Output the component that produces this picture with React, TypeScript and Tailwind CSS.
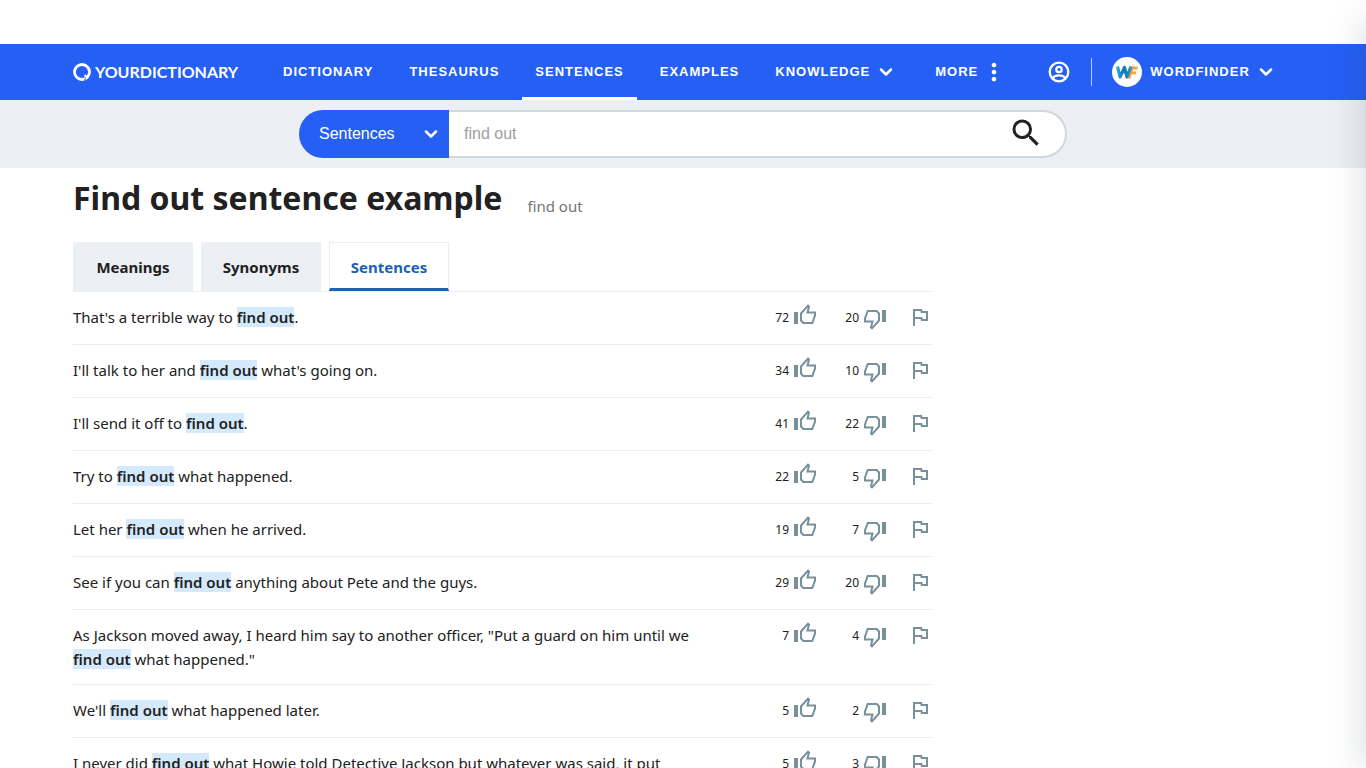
import { FiChevronDown } from "react-icons/fi";
import { MdMoreVert, MdOutlineFlag, MdSearch } from "react-icons/md";

type Sentence = {
    before: string;
    after: string;
    up: number;
    down: number;
};

const sentences: Sentence[] = [
    { before: "That's a terrible way to ", after: ".", up: 72, down: 20 },
    { before: "I'll talk to her and ", after: " what's going on.", up: 34, down: 10 },
    { before: "I'll send it off to ", after: ".", up: 41, down: 22 },
    { before: "Try to ", after: " what happened.", up: 22, down: 5 },
    { before: "Let her ", after: " when he arrived.", up: 19, down: 7 },
    { before: "See if you can ", after: " anything about Pete and the guys.", up: 29, down: 20 },
    {
        before: "As Jackson moved away, I heard him say to another officer, \"Put a guard on him until we ",
        after: " what happened.\"",
        up: 7,
        down: 4,
    },
    { before: "We'll ", after: " what happened later.", up: 5, down: 2 },
    {
        before: "I never did ",
        after: " what Howie told Detective Jackson but whatever was said, it put",
        up: 5,
        down: 3,
    },
];

const navLinks = ["Dictionary", "Thesaurus", "Sentences", "Examples"];
const tabs = ["Meanings", "Synonyms", "Sentences"];

function ThumbIcon({ className = "" }: { className?: string }) {
    return (
        <svg viewBox="0 0 24 24" className={`size-6 ${className}`} fill="none">
            <path d="M1 10h4v12H1z" fill="currentColor" />
            <path
                d="M8 18.500V11.500L15 3.600l1 1-1.500 5.900H22v3L19.300 21h-9z"
                stroke="currentColor"
                strokeWidth="2"
            />
        </svg>
    );
}

function AccountIcon() {
    return (
        <svg viewBox="0 0 24 24" className="size-6" fill="none" stroke="currentColor" strokeWidth="2.300">
            <circle cx="12" cy="12" r="9.300" />
            <circle cx="12" cy="9.500" r="2.700" />
            <path d="M5.500 18c1.800-2 4-2.600 6.500-2.600s4.700.6 6.500 2.600" />
        </svg>
    );
}

function Logo() {
    return (
        <a href="#" className="flex w-[210px] shrink-0 items-center gap-1 tracking-normal text-white">
            <svg viewBox="0 0 18 18" className="size-[18px]" fill="none">
                <circle cx="9" cy="9" r="7.5" stroke="currentColor" strokeWidth="2.800" />
                <path d="M11.500 17.500l1.500-3.500" stroke="#255ff4" strokeWidth="1" />
                <path d="M11.500 12l3 3" stroke="currentColor" strokeWidth="2" />
            </svg>
            <span className="font-['Lato',sans-serif] text-base font-bold">YOURDICTIONARY</span>
        </a>
    );
}

function WordFinderLogo() {
    return (
        <svg viewBox="0 0 30 30" className="size-[30px]" fill="none">
            <defs>
                <linearGradient id="wf-w" x1="4" y1="0" x2="19" y2="0" gradientUnits="userSpaceOnUse">
                    <stop stopColor="#27b5d8" />
                    <stop offset="0.5" stopColor="#1273b8" />
                    <stop offset="1" stopColor="#1f9bb5" />
                </linearGradient>
            </defs>
            <circle cx="15" cy="15" r="15" fill="#fff" />
            <path d="M17 21.500L20 11H25.500M19 15.800h5" stroke="#f9a13a" strokeWidth="2.800" />
            <path
                d="M5.500 9.500l2.500 10.500 4.500-9.500 2.500 9.500 4-10.500"
                stroke="url(#wf-w)"
                strokeWidth="3.200"
                strokeLinejoin="round"
            />
        </svg>
    );
}

function Header() {
    return (
        <header className="h-14 bg-[#255ff4] px-[73px] font-['Liberation_Sans',sans-serif] text-[13px] font-bold tracking-[1px] text-white">
            <nav className="flex h-full items-center">
                <Logo />
                <div className="-ml-[13px] flex h-full gap-[10px]">
                    {navLinks.map((label) => (
                        <a
                            key={label}
                            href="#"
                            className={`flex h-full items-center border-b-3 px-[13px] pt-[2px] uppercase ${
                                label === "Sentences" ? "border-white" : "border-transparent"
                            }`}
                        >
                            {label}
                        </a>
                    ))}
                </div>
                <button className="ml-[23px] flex items-center gap-[6px]">
                    KNOWLEDGE
                    <FiChevronDown className="size-5" strokeWidth={3} />
                </button>
                <button className="ml-[39px] flex items-center gap-[2px]">
                    MORE
                    <MdMoreVert className="size-7" />
                </button>
                <button aria-label="Account" className="ml-[39px]">
                    <AccountIcon />
                </button>
                <div className="ml-5 h-7 w-px bg-white/70" />
                <button className="ml-5 flex items-center gap-2">
                    <WordFinderLogo />
                    <span className="flex items-center gap-[6px]">
                        WORDFINDER
                        <FiChevronDown className="size-5" strokeWidth={3} />
                    </span>
                </button>
            </nav>
        </header>
    );
}

function SearchBar() {
    return (
        <div className="bg-[#eceff4] py-[10px] font-['Liberation_Sans',sans-serif]">
            <form className="mx-auto flex h-12 w-full max-w-3xl">
                <div className="relative">
                    <select
                        aria-label="Search in"
                        className="h-full w-[150px] appearance-none rounded-l-full bg-[#255ff4] pl-5 text-base text-white"
                    >
                        <option>Sentences</option>
                    </select>
                    <FiChevronDown
                        className="pointer-events-none absolute top-[14px] right-2 size-5 text-white"
                        strokeWidth={3}
                    />
                </div>
                <div className="flex flex-1 items-center rounded-r-full border-2 border-l-0 border-[#cfd8dc] bg-white pr-[21px]">
                    <input
                        aria-label="Search"
                        placeholder="find out"
                        className="h-full min-w-0 flex-1 px-[15px] text-base outline-none placeholder:text-[#9e9e9e]"
                    />
                    <button type="button" aria-label="Submit search" className="pb-[2px]">
                        <MdSearch className="size-9 text-[#212121]" />
                    </button>
                </div>
            </form>
        </div>
    );
}

function SentenceRow({ sentence }: { sentence: Sentence }) {
    return (
        <li className="flex justify-between border-b border-[#eceff1] py-[13px]">
            <p className="w-[640px] leading-6">
                {sentence.before}
                <strong className="bg-[#d4eafc] font-semibold">find out</strong>
                {sentence.after}
            </p>
            <div className="flex h-[26px] items-center pr-px text-xs text-[#78909c]">
                <button aria-label="Like" className="flex w-12 items-center justify-end gap-1">
                    <span className="text-[#212121]">{sentence.up}</span>
                    <ThumbIcon className="-mt-2" />
                </button>
                <button aria-label="Dislike" className="ml-5 flex w-[50px] items-center justify-end gap-1">
                    <span className="text-[#212121]">{sentence.down}</span>
                    <ThumbIcon className="mt-1 rotate-180" />
                </button>
                <button aria-label="Report" className="ml-[21px] pb-[2px]">
                    <MdOutlineFlag className="size-6" />
                </button>
            </div>
        </li>
    );
}

export default function App() {
    return (
        <div className="min-h-screen overflow-x-clip bg-white pt-11 font-['Noto_Sans',sans-serif] text-[#212121]">
            <Header />
            <SearchBar />
            <main className="px-[73px]">
                <div className="max-w-[860px]">
                    <div className="flex items-center gap-[25px] pt-[6px]">
                        <h1 className="text-[32px] leading-12 font-bold">Find out sentence example</h1>
                        <span className="pt-4 text-[15px] leading-6 text-[#757575]">find out</span>
                    </div>
                    <div className="mt-5 flex gap-2 border-b border-[#eceff1] text-[15px] font-bold">
                        {tabs.map((tab) => (
                            <a
                                key={tab}
                                href="#"
                                className={
                                    tab === "Sentences"
                                        ? "flex h-[49px] w-[120px] items-center justify-center border border-b-3 border-[#eceff1] border-b-[#1b63b5] pt-[3px] text-[#1b5fb8]"
                                        : "flex h-[49px] w-[120px] items-center justify-center bg-[#eceff4] pt-px"
                                }
                            >
                                {tab}
                            </a>
                        ))}
                    </div>
                    <ul className="text-[15px]">
                        {sentences.map((sentence) => (
                            <SentenceRow key={sentence.before} sentence={sentence} />
                        ))}
                    </ul>
                </div>
            </main>
            {/* Closed side drawer, only its shadow reaches the page */}
            <div className="fixed top-5 bottom-0 left-full w-80 shadow-[0_0_36px_rgba(38,60,76,0.2)]" />
        </div>
    );
}
